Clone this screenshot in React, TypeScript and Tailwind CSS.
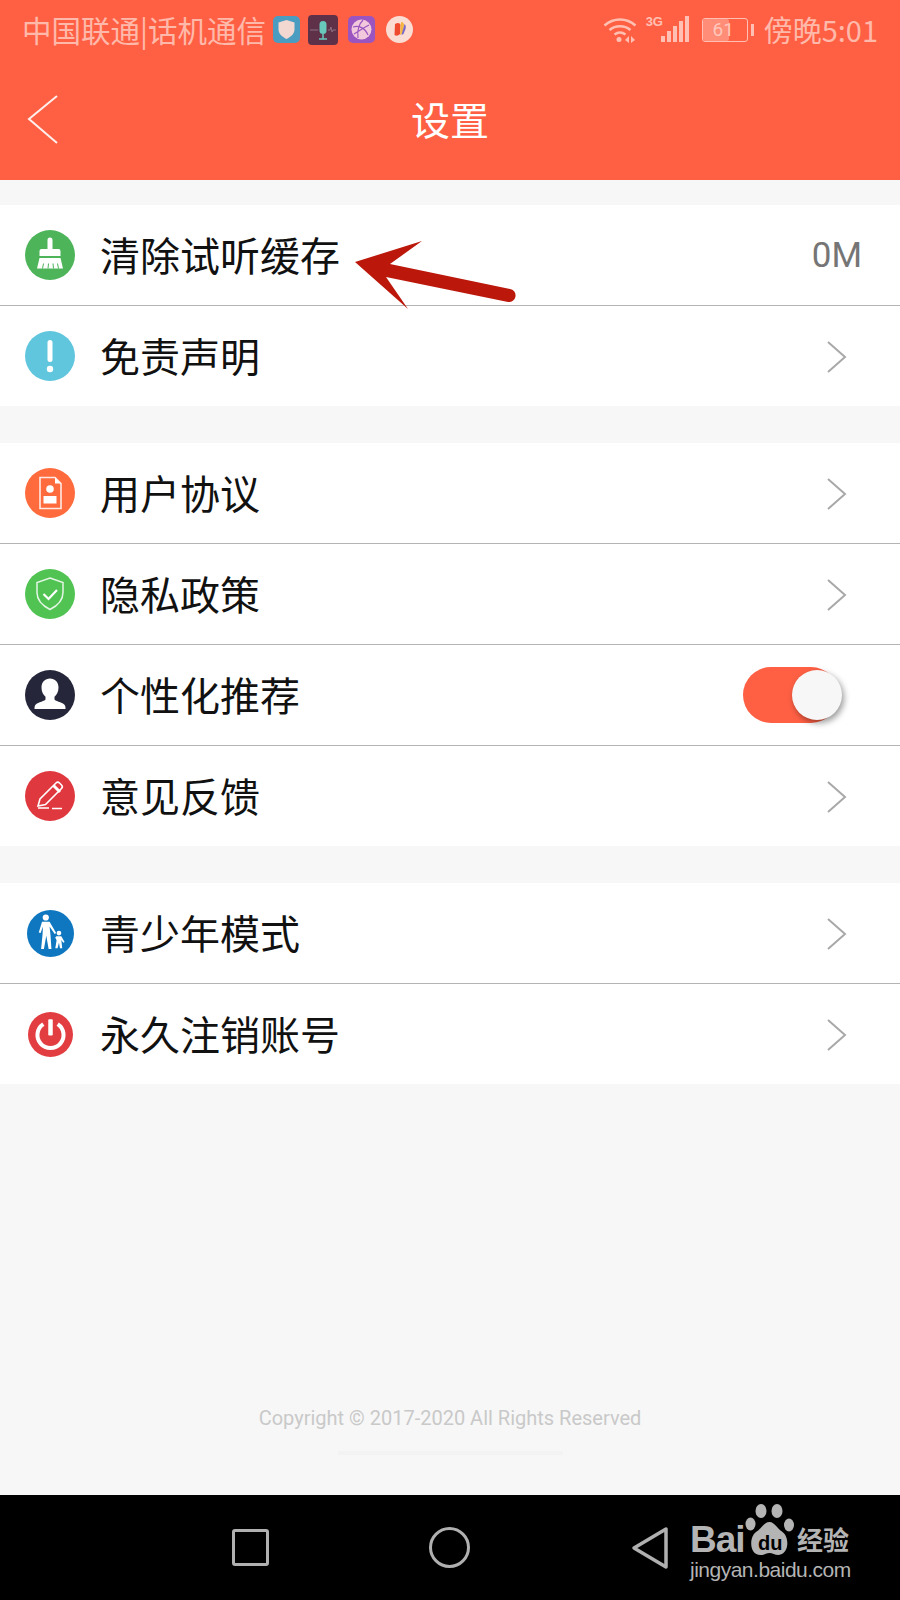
const cjk = "font-['Noto_Sans_CJK_SC','Noto_Sans',sans-serif]";

function Circle({ bg, size = 50, children }: { bg: string; size?: number; children: React.ReactNode }) {
  return (
    <svg width={size} height={size} viewBox="0 0 50 50" className="shrink-0">
      <circle cx="25" cy="25" r="25" fill={bg} />
      {children}
    </svg>
  );
}

function BroomIcon() {
  return (
    <Circle bg="#4db45a">
      <path d="M22.500 10a2.500 2.500 0 0 1 5 0V19h6a2 2 0 0 1 2 2v5H14.500v-5a2 2 0 0 1 2-2h6z" fill="#fff" />
      <path d="M14.500 28h21l2.500 10.500H12z" fill="#fff" />
      <path d="M17.500 38.500l1-5M23 38.500l.5-5M28.500 38.500l-.5-5M33.500 38.500l-1-5" stroke="#4db45a" strokeWidth="1" />
    </Circle>
  );
}

function AlertIcon() {
  return (
    <Circle bg="#5fc6de">
      <rect x="22.500" y="9" width="5" height="22" rx="2.500" fill="#fff" />
      <circle cx="25" cy="38" r="3.200" fill="#fff" />
    </Circle>
  );
}

function DocIcon() {
  return (
    <Circle bg="#ff6b3c">
      <path d="M15 9.500h15l6 6v25H15z" fill="none" stroke="#fff" strokeOpacity="0.85" strokeWidth="1.600" />
      <path d="M30 9.500v6h6z" fill="#fff" />
      <circle cx="25" cy="21" r="3.800" fill="#fff" />
      <rect x="18.500" y="28" width="13" height="7.500" fill="#fff" />
    </Circle>
  );
}

function ShieldIcon() {
  return (
    <Circle bg="#50c353">
      <path d="M25 9l13 4.500v10c0 8-6 13.500-13 17-7-3.500-13-9-13-17v-10z" fill="none" stroke="#fff" strokeOpacity="0.85" strokeWidth="1.500" />
      <path d="M18.500 25l5 5 8.500-9" fill="none" stroke="#fff" strokeWidth="2.200" />
    </Circle>
  );
}

function UserIcon() {
  return (
    <Circle bg="#25263a">
      <path d="M25 8.500c5 0 8.500 3.600 8.500 9 0 4-1.700 7.500-4 9.200v2.500c0 2 7.500 2.600 10 5.600 1 1.200 1 3 1 4.200H9.500c0-1.200 0-3 1-4.200 2.500-3 10-3.600 10-5.600v-2.500c-2.300-1.700-4-5.200-4-9.200 0-5.400 3.500-9 8.500-9z" fill="#fff" />
    </Circle>
  );
}

function PenIcon() {
  return (
    <Circle bg="#e0383f">
      <path d="M13 35l2-7 16-16a2.500 2.500 0 0 1 3.500 0l2 2a2.500 2.500 0 0 1 0 3.500l-16 16z" fill="none" stroke="#fff" strokeWidth="1.600" />
      <path d="M28.500 14.500l6.500 6.500" stroke="#fff" strokeWidth="3" />
      <path d="M13 37h11M27 37.500h10" stroke="#fff" strokeWidth="1.600" />
    </Circle>
  );
}

function FamilyIcon() {
  return (
    <Circle bg="#0f77bf" size={47}>
      <circle cx="20" cy="8" r="3.300" fill="#fff" />
      <path d="M16 12.500h8l7 12-1.500 1-5.500-8 1 9 1 15h-3l-2.500-14-2.500 14h-3l1.500-15 .5-9-2.500 7-2-.6z" fill="#fff" />
      <circle cx="34" cy="24.500" r="2.500" fill="#fff" />
      <path d="M31.500 28h5l3.500 6-1.400.8-2.100-3 1 9h-2.400l-1.100-6-1.500 6h-2.400l1.400-8.500-1.500-3 1.300-1.300z" fill="#fff" />
    </Circle>
  );
}

function PowerIcon() {
  return (
    <Circle bg="#e23d41" size={45}>
      <path d="M17 13.500a14.500 14.500 0 1 0 16 0" fill="none" stroke="#fff" strokeWidth="4.500" />
      <rect x="22.500" y="8" width="5" height="18" rx="1" fill="#fff" />
    </Circle>
  );
}

function Chevron() {
  return (
    <svg width="22" height="34" viewBox="0 0 22 34" className="mr-[17px] mt-[1px]">
      <path d="M2 2l17 15L2 32" fill="none" stroke="#a8a8a8" strokeWidth="2" />
    </svg>
  );
}

function Toggle() {
  return (
    <div className="relative mr-[26px] h-[56px] w-[96px] rounded-full bg-[#ff6044]">
      <div className="absolute left-[49px] top-[3px] h-[50px] w-[50px] rounded-full bg-[#f7f7f7] shadow-[2px_3px_6px_rgba(0,0,0,0.4)]" />
    </div>
  );
}

function Row({ icon, label, right, last }: { icon: React.ReactNode; label: string; right?: React.ReactNode; last?: boolean }) {
  return (
    <div className={`flex items-center bg-white pr-[35px] ${last ? "h-[100px]" : "h-[101px] border-b border-[#b4b4b4]"}`}>
      <div className="flex w-[100px] shrink-0 justify-center">{icon}</div>
      <span className={`${cjk} pb-[2px] text-[40px] leading-none text-[#111]`}>{label}</span>
      <div className="ml-auto flex items-center">{right ?? <Chevron />}</div>
    </div>
  );
}

function StatusLeftIcons() {
  return (
    <div className="ml-[7px] flex items-center">
      <div className="flex h-[27px] w-[27px] items-center justify-center rounded-[5px] bg-[#4a9cc0]">
        <svg width="17" height="19" viewBox="0 0 17 19"><path d="M8.500 0l8 2.500v7c0 4.500-4 7.500-8 9.500-4-2-8-5-8-9.500v-7z" fill="#f2d8d0" /></svg>
      </div>
      <div className="ml-[8px] flex h-[30px] w-[30px] items-center justify-center rounded-[4px] bg-[#5e3148]">
        <svg width="26" height="22" viewBox="0 0 26 22">
          <rect x="9.500" y="2" width="7" height="13" rx="3.500" fill="#68c8bc" />
          <path d="M13 15v5M9 20h8" stroke="#68c8bc" strokeWidth="1.500" />
          <path d="M0 11h8M18 11h2l1-3 1 5 1-2h3" fill="none" stroke="#8d7080" strokeWidth="1" />
        </svg>
      </div>
      <div className="ml-[10px] flex h-[27px] w-[27px] items-center justify-center rounded-[5px] bg-[#9b55c0]">
        <svg width="21" height="21" viewBox="0 0 21 21">
          <circle cx="10.500" cy="10.500" r="10" fill="#f2c8dc" />
          <path d="M2 8c6-2 12 1 15 8M12 1c-4 4-6 10-5 18M3 15c5-3 9-6 15-9" fill="none" stroke="#9b55c0" strokeWidth="1.200" />
        </svg>
      </div>
      <svg width="27" height="27" viewBox="0 0 27 27" className="ml-[11px]">
        <circle cx="13.500" cy="13.500" r="13.500" fill="#fbdcd2" />
        <path d="M9 8c3-2 5-1 5.500 1l-.5 9c-2 2-4 2-5.500 1z" fill="#f04a2e" />
        <path d="M15 6c2 0 3 1 3 3l-1.500 8-2.500 2z" fill="#f4b63f" />
        <path d="M18.500 8c1.500 1 1.500 3 1 5l-2 5-2 1z" fill="#7a68c8" />
      </svg>
    </div>
  );
}

function StatusRightIcons() {
  return (
    <div className="flex items-center text-[#ffc0b3]">
      <svg width="34" height="27" viewBox="0 0 34 27" className="mr-[24px]">
        <path d="M1.500 9.500c9-8 22-8 31 0M6.500 14c6-5 15-5 21 0M11.500 18.500c3.500-2.500 7.500-2.500 11 0" fill="none" stroke="currentColor" strokeWidth="2.500" />
        <circle cx="16" cy="23.500" r="2.500" fill="currentColor" />
        <path d="M22 24l4-4v7zM28 20l4 4-4 3z" fill="currentColor" />
      </svg>
      <div className="relative h-[29px] w-[28px]">
        <span className="absolute left-[-15px] top-[0px] font-['Liberation_Sans',sans-serif] text-[13px] font-bold leading-none">3G</span>
        <svg width="28" height="28" viewBox="0 0 28 28" className="absolute left-0 top-0">
          <rect x="0" y="21" width="4" height="6" fill="currentColor" />
          <rect x="6" y="16" width="4" height="11" fill="currentColor" />
          <rect x="12" y="11" width="4" height="16" fill="currentColor" />
          <rect x="18" y="6" width="4" height="21" fill="currentColor" />
          <rect x="24" y="1" width="4" height="26" fill="currentColor" />
        </svg>
      </div>
      <div className="relative ml-[13px] flex h-[24px] w-[46px] items-center rounded-[3px] border border-[#ffc0b3]">
        <div className="h-full w-[61%] rounded-[2px] bg-[#ff8d78]" />
        <span className="absolute inset-0 flex items-center justify-center pr-[3px] font-['Roboto',sans-serif] text-[19px] leading-none text-[#ffc7bb]">61</span>
      </div>
      <div className="ml-[3px] h-[12px] w-[3px] bg-[#ffc0b3]" />
    </div>
  );
}

function RedArrow() {
  return (
    <svg width="900" height="120" viewBox="0 200 900 120" className="pointer-events-none absolute left-0 top-[200px]">
      <path d="M355 262L422 241L390 264L510 289a6.500 6.500 0 0 1-2 13L386 277L408 309z" fill="#bb180b" />
    </svg>
  );
}

function BaiduMark() {
  return (
    <div className="absolute left-[690px] top-[1504px] h-[86px] w-[165px] text-[#b4b4b4]">
      <span className="absolute left-0 top-[16px] font-['Liberation_Sans',sans-serif] text-[37px] font-bold leading-[40px] tracking-[-1px]">Bai</span>
      <svg width="52" height="54" viewBox="0 0 52 54" className="absolute left-[54px] top-0">
        <ellipse cx="17" cy="7" rx="5.500" ry="7" fill="currentColor" />
        <ellipse cx="33" cy="7" rx="5.500" ry="7" fill="currentColor" />
        <ellipse cx="6.500" cy="20" rx="5" ry="6.500" fill="currentColor" />
        <ellipse cx="45" cy="21" rx="5" ry="6.500" fill="currentColor" />
        <path d="M25.500 18c5 0 7 6 13 10 7 5 7 22-4 23-4 0-6-2-9-2s-5 2-9 2C5 51 5 33 12 28c6-4 8-10 13.500-10z" fill="currentColor" />
      </svg>
      <span className="absolute left-[68px] top-[28px] font-['Liberation_Sans',sans-serif] text-[20px] font-bold leading-[22px] text-black">du</span>
      <span className={`${cjk} absolute left-[107px] top-[19px] text-[26px] font-bold leading-[32px]`}>经验</span>
      <span className="absolute left-0 top-[53px] font-['Liberation_Sans',sans-serif] text-[21px] leading-[26px] tracking-[-0.5px]">jingyan.baidu.com</span>
    </div>
  );
}

export default function App() {
  return (
    <div className="relative flex h-[1600px] w-[900px] flex-col overflow-hidden bg-[#f7f7f7]">
      <header className="h-[180px] shrink-0 bg-[#ff6044]">
        <div className="flex h-[60px] items-center pb-[1px] pl-[22px] pr-[22px]">
          <span className={`${cjk} text-[29.5px] leading-none text-[#ffb9aa]`}>中国联通|话机通信</span>
          <StatusLeftIcons />
          <div className="ml-auto flex items-center">
            <StatusRightIcons />
            <span className={`${cjk} ml-[10px] text-[29px] leading-none text-[#ffb9aa]`}>傍晚5:01</span>
          </div>
        </div>
        <div className="relative flex h-[120px] items-center justify-center pb-[3px]">
          <svg width="34" height="52" viewBox="0 0 34 52" className="absolute left-[26px] top-[34px]">
            <path d="M31 2L3 25l28 24" fill="none" stroke="#fff" strokeOpacity="0.9" strokeWidth="2" />
          </svg>
          <span className={`${cjk} text-[39px] leading-none text-white`}>设置</span>
        </div>
      </header>

      <div className="mt-[25px] flex flex-col">
        <Row icon={<BroomIcon />} label="清除试听缓存" right={<span className="mr-[3px] font-['Roboto',sans-serif] text-[35px] leading-none text-[#757575]">0M</span>} />
        <Row icon={<AlertIcon />} label="免责声明" last />
      </div>

      <div className="mt-[37px] flex flex-col">
        <Row icon={<DocIcon />} label="用户协议" />
        <Row icon={<ShieldIcon />} label="隐私政策" />
        <Row icon={<UserIcon />} label="个性化推荐" right={<Toggle />} />
        <Row icon={<PenIcon />} label="意见反馈" last />
      </div>

      <div className="mt-[37px] flex flex-col">
        <Row icon={<FamilyIcon />} label="青少年模式" />
        <Row icon={<PowerIcon />} label="永久注销账号" last />
      </div>

      <div className="mt-auto flex flex-col items-center pb-[40px]">
        <span className="font-['Roboto',sans-serif] text-[20px] leading-[24px] text-[#c9c9c9]">Copyright © 2017-2020 All Rights Reserved</span>
        <div className="mt-[21px] h-[4px] w-[225px] bg-[#f3f3f3]" />
      </div>

      <footer className="relative h-[105px] shrink-0 bg-black">
        <div className="absolute left-[232px] top-[34px] h-[37px] w-[37px] rounded-[3px] border-[3px] border-[#b0b0b0]" />
        <div className="absolute left-[429px] top-[32px] h-[41px] w-[41px] rounded-full border-[3px] border-[#b0b0b0]" />
        <svg width="38" height="44" viewBox="0 0 38 44" className="absolute left-[631px] top-[31px]">
          <path d="M35 3v38L3 22z" fill="none" stroke="#b0b0b0" strokeWidth="3.500" strokeLinejoin="round" />
        </svg>
      </footer>

      <RedArrow />
      <BaiduMark />
    </div>
  );
}
